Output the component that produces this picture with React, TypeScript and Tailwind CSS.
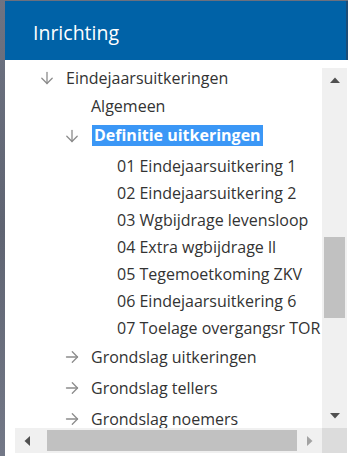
import { ReactNode } from 'react'

function ArrowDownIcon() {
    return (
        <svg width="14" height="14" viewBox="0 0 14 14" fill="none" stroke="#8c8c8c" strokeWidth="1.3" strokeLinecap="round" strokeLinejoin="round">
            <path d="M7 1.5v11" />
            <path d="M1.8 7.3 7 12.5l5.2-5.2" />
        </svg>
    )
}

function ArrowRightIcon() {
    return (
        <svg width="14" height="14" viewBox="0 0 14 14" fill="none" stroke="#8c8c8c" strokeWidth="1.3" strokeLinecap="round" strokeLinejoin="round">
            <path d="M1.5 7h11" />
            <path d="M7.3 1.8 12.5 7l-5.2 5.2" />
        </svg>
    )
}

function Row(props: { level: number, icon?: 'down' | 'right', className?: string, children: ReactNode }) {
    const pad = props.level == 0 ? 'pl-[35px]' : props.level == 1 ? 'pl-[60px]' : 'pl-[86px]'
    return (
        <div className={`flex items-center h-[27px] whitespace-nowrap ${pad} ${props.className ?? ''}`}>
            <span className="w-[26px] flex items-center shrink-0">
                {props.icon == 'down' && <ArrowDownIcon />}
                {props.icon == 'right' && <ArrowRightIcon />}
            </span>
            {props.children}
        </div>
    )
}

export default function App() {
    return (
        <div className="w-[348px] h-[456px] flex bg-[#6b707e] overflow-hidden" style={{ fontFamily: '"Open Sans", "Noto Sans", sans-serif' }}>
            <div className="w-[5px] shrink-0 bg-gradient-to-b from-[#6e7382] via-[#5f6472] to-[#737887]" />
            <div className="flex-1 flex flex-col pt-[1px]">
                <div className="h-[59px] bg-[#0062a7] border-r-2 border-[#1b4d77] flex items-center pl-[28px] pt-[4px]">
                    <span className="text-white text-[19.5px]">Inrichting</span>
                </div>
                <div className="flex-1 flex flex-col bg-white">
                    <div className="flex h-[368px]">
                        <div className="flex-1 overflow-hidden pt-[4px] text-[16px] text-[#333333]">
                            <Row level={0} icon="down">Eindejaarsuitkeringen</Row>
                            <Row level={1} className="mt-[1px]">Algemeen</Row>
                            <Row level={1} icon="down" className="mt-[3px]">
                                <span className="bg-[#3b97f6] text-white font-bold px-[2px] h-[21px] leading-[21px] ml-[1px]">Definitie uitkeringen</span>
                            </Row>
                            <Row level={2} className="mt-[3px]">01 Eindejaarsuitkering 1</Row>
                            <Row level={2}>02 Eindejaarsuitkering 2</Row>
                            <Row level={2}>03 Wgbijdrage levensloop</Row>
                            <Row level={2}>04 Extra wgbijdrage ll</Row>
                            <Row level={2}>05 Tegemoetkoming ZKV</Row>
                            <Row level={2}>06 Eindejaarsuitkering 6</Row>
                            <Row level={2}>07 Toelage overgangsr TOR</Row>
                            <Row level={1} icon="right" className="mt-[2px]">Grondslag uitkeringen</Row>
                            <Row level={1} icon="right" className="mt-[4px]">Grondslag tellers</Row>
                            <Row level={1} icon="right" className="mt-[4px]">Grondslag noemers</Row>
                        </div>
                        {/* vertical scrollbar */}
                        <div className="w-[25px] mt-[8px] mr-[1px] bg-[#f0f0f0] flex flex-col">
                            <div className="h-[24px] flex items-center justify-center">
                                <svg width="10" height="6" viewBox="0 0 10 6"><path d="M0 6 5 0.5 10 6z" fill="#505050" /></svg>
                            </div>
                            <div className="h-[145px]" />
                            <div className="h-[81px] mx-[2px] bg-[#c1c1c1]" />
                            <div className="flex-1" />
                            <div className="h-[24px] flex items-center justify-center">
                                <svg width="10" height="6" viewBox="0 0 10 6"><path d="M0 0 5 5.5 10 0z" fill="#505050" /></svg>
                            </div>
                        </div>
                    </div>
                    {/* horizontal scrollbar */}
                    <div className="flex h-[25px] pl-[10px] mr-[1px]">
                        <div className="flex-1 bg-[#f0f0f0] flex items-center">
                            <div className="w-[24px] flex items-center justify-center">
                                <svg width="6" height="10" viewBox="0 0 6 10"><path d="M6 0 0.5 5 6 10z" fill="#505050" /></svg>
                            </div>
                            <div className="w-[8px]" />
                            <div className="w-[250px] h-[21px] bg-[#c1c1c1]" />
                            <div className="flex-1 flex items-center justify-center">
                                <svg width="6" height="10" viewBox="0 0 6 10"><path d="M0 0 5.5 5 0 10z" fill="#a3a3a3" /></svg>
                            </div>
                        </div>
                        <div className="w-[25px] bg-[#dcdcdc]" />
                    </div>
                    <div className="h-[3px]" />
                </div>
            </div>
        </div>
    )
}
